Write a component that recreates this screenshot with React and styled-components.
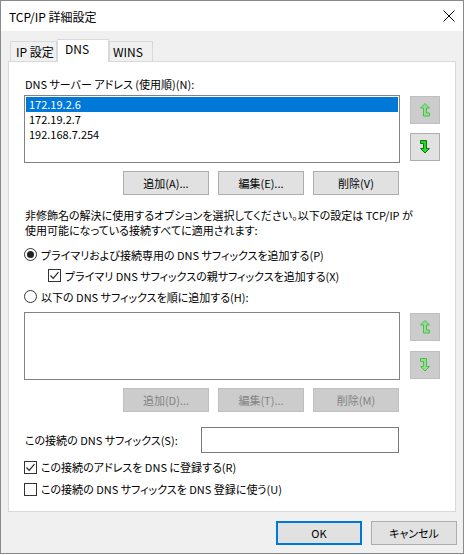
import React from "react";
import styled, { createGlobalStyle } from "styled-components";

const GlobalStyle = createGlobalStyle`
  html, body {
    margin: 0;
    padding: 0;
    background: #ffffff;
  }
  body {
    font-family: "Noto Sans CJK JP", "Noto Sans", sans-serif;
    font-size: 11px;
    font-feature-settings: "palt";
    color: #000;
  }
`;

const Window = styled.div`
  width: 464px;
  height: 554px;
  box-sizing: border-box;
  border: 1px solid #8a8a8a;
  display: flex;
  flex-direction: column;
  background: #f0f0f0;
`;

const TitleBar = styled.div`
  height: 30px;
  background: #fff;
  display: flex;
  align-items: center;
  justify-content: space-between;
  padding: 0 8px 0 8px;
`;

const Title = styled.span`
  font-size: 12px;
  line-height: 15px;
`;

const Body = styled.div`
  flex: 1;
  padding: 8px 7px 0 7px;
  display: flex;
  flex-direction: column;
`;

const TabRow = styled.div`
  height: 22px;
  display: flex;
  align-items: flex-end;
  padding-left: 2px;
`;

const Tab = styled.div`
  box-sizing: border-box;
  width: ${(p) => p.$w}px;
  height: ${(p) => (p.$active ? 23 : 20)}px;
  margin-bottom: ${(p) => (p.$active ? -1 : 0)}px;
  border: 1px solid #d9d9d9;
  border-bottom: none;
  background: ${(p) => (p.$active ? "#fff" : "#f0f0f0")};
  position: relative;
  z-index: ${(p) => (p.$active ? 1 : 0)};
  padding-left: ${(p) => p.$pl}px;
  line-height: ${(p) => (p.$active ? 17 : 19)}px;
  font-size: 12px;
`;

const Panel = styled.div`
  box-sizing: border-box;
  width: 448px;
  height: 451px;
  border: 1px solid #d9d9d9;
  background: #fff;
  padding: 15px 14px 0 15px;
  display: flex;
  flex-direction: column;
`;

const Label = styled.div`
  line-height: 15px;
  height: 15px;
  padding-left: 1px;
  white-space: nowrap;
`;

const ListRow = styled.div`
  display: flex;
  gap: 10px;
  margin-top: ${(p) => p.$mt}px;
`;

const ListBox = styled.div`
  box-sizing: border-box;
  width: 376px;
  height: 68px;
  border: 1px solid #828282;
  background: #fff;
  padding: 1px;
`;

const ListItem = styled.div`
  height: 15px;
  line-height: 15px;
  padding-left: 3px;
  background: ${(p) => (p.$selected ? "#0078d7" : "transparent")};
  color: ${(p) => (p.$selected ? "#fff" : "#000")};
`;

const ArrowColumn = styled.div`
  display: flex;
  flex-direction: column;
  gap: ${(p) => p.$gap}px;
  padding-top: 1px;
`;

const ArrowButton = styled.div`
  box-sizing: border-box;
  width: 30px;
  height: 28px;
  border: 1px solid ${(p) => (p.$disabled ? "#bfbfbf" : "#adadad")};
  background: ${(p) => (p.$disabled ? "#cccccc" : "#e1e1e1")};
  display: flex;
  align-items: center;
  justify-content: center;
`;

const ButtonRow = styled.div`
  width: 376px;
  display: flex;
  justify-content: flex-end;
  gap: 9px;
  padding-right: 1px;
  box-sizing: border-box;
  margin-top: ${(p) => p.$mt}px;
`;

const Button = styled.div`
  box-sizing: border-box;
  width: 86px;
  height: 24px;
  border: ${(p) => (p.$default ? "2px solid #0078d7" : p.$disabled ? "1px solid #bfbfbf" : "1px solid #adadad")};
  background: ${(p) => (p.$disabled ? "#cccccc" : "#e1e1e1")};
  color: ${(p) => (p.$disabled ? "#838383" : "#000")};
  display: flex;
  align-items: center;
  justify-content: center;
  white-space: nowrap;
`;

const Paragraph = styled.div`
  margin-top: 13px;
  line-height: 15px;
  padding-left: 1px;
  white-space: nowrap;
`;

const OptionRow = styled.div`
  height: ${(p) => p.$h}px;
  display: flex;
  align-items: center;
  gap: 4px;
  padding-left: ${(p) => p.$indent || 0}px;
  margin-top: ${(p) => p.$mt || 0}px;
  white-space: nowrap;
`;

const Radio = styled.span`
  box-sizing: border-box;
  width: 13px;
  height: 13px;
  border-radius: 50%;
  border: 1px solid #333;
  display: flex;
  align-items: center;
  justify-content: center;
  flex: none;
  &::after {
    content: "";
    width: 7px;
    height: 7px;
    border-radius: 50%;
    background: ${(p) => (p.$checked ? "#222" : "transparent")};
  }
`;

const CheckBox = styled.span`
  box-sizing: border-box;
  width: 13px;
  height: 13px;
  border: 1px solid #333;
  background: #fff;
  display: flex;
  align-items: center;
  justify-content: center;
  flex: none;
`;

const SuffixRow = styled.div`
  display: flex;
  align-items: center;
  margin-top: 15px;
`;

const SuffixLabel = styled.span`
  width: 177px;
  padding-left: 1px;
  box-sizing: border-box;
  white-space: nowrap;
`;

const TextInput = styled.div`
  box-sizing: border-box;
  width: 198px;
  height: 26px;
  border: 1px solid #7a7a7a;
  background: #fff;
`;

const Footer = styled.div`
  display: flex;
  justify-content: flex-end;
  gap: 9px;
  margin-top: 9px;
  margin-right: -1px;
`;

function CheckMark() {
  return (
    <svg width="11" height="11" viewBox="0 0 11 11">
      <path d="M1.5 5.5 L4.2 8.3 L9.5 2.2" fill="none" stroke="#222" strokeWidth="1.2" />
    </svg>
  );
}

function UpArrow({ disabled }) {
  return (
    <svg width="10" height="14" viewBox="0 0 10 14">
      <path
        d="M9.5 13 L3.5 13 L3.5 5 L0.5 5 L5 0.5 L9.5 5 L6.5 5 L6.5 10 L9.5 10 Z"
        fill={disabled ? "#8fe08f" : "#2bd62b"}
        stroke={disabled ? "#4cbb4c" : "#067a06"}
        strokeWidth="1"
      />
    </svg>
  );
}

function DownArrow({ disabled }) {
  return (
    <svg width="10" height="14" viewBox="0 0 10 14">
      <path
        d="M0.5 0.5 L6.5 0.5 L6.5 8.5 L9.5 8.5 L5 13 L0.5 8.5 L3.5 8.5 L3.5 3.5 L0.5 3.5 Z"
        fill={disabled ? "#8fe08f" : "#2bd62b"}
        stroke={disabled ? "#4cbb4c" : "#067a06"}
        strokeWidth="1"
      />
    </svg>
  );
}

function CloseIcon() {
  return (
    <svg width="12" height="12" viewBox="0 0 12 12">
      <path d="M0.5 0.5 L11.5 11.5 M11.5 0.5 L0.5 11.5" stroke="#000" strokeWidth="1" />
    </svg>
  );
}

export default function App() {
  return (
    <>
      <GlobalStyle />
      <Window>
        <TitleBar>
          <Title>TCP/IP 詳細設定</Title>
          <CloseIcon />
        </TitleBar>
        <Body>
          <TabRow>
            <Tab $w={47} $pl={5}>IP 設定</Tab>
            <Tab $w={52} $pl={7} $active>DNS</Tab>
            <Tab $w={44} $pl={3}>WINS</Tab>
          </TabRow>
          <Panel>
            <Label>DNS サーバー アドレス (使用順)(N):</Label>
            <ListRow $mt={3}>
              <ListBox>
                <ListItem $selected>172.19.2.6</ListItem>
                <ListItem>172.19.2.7</ListItem>
                <ListItem>192.168.7.254</ListItem>
              </ListBox>
              <ArrowColumn $gap={9}>
                <ArrowButton $disabled>
                  <UpArrow disabled />
                </ArrowButton>
                <ArrowButton>
                  <DownArrow />
                </ArrowButton>
              </ArrowColumn>
            </ListRow>
            <ButtonRow $mt={8}>
              <Button>追加(A)...</Button>
              <Button>編集(E)...</Button>
              <Button>削除(V)</Button>
            </ButtonRow>
            <Paragraph>
              非修飾名の解決に使用するオプションを選択してください。以下の設定は TCP/IP が
              <br />
              使用可能になっている接続すべてに適用されます:
            </Paragraph>
            <OptionRow $h={21} $mt={6}>
              <Radio $checked />
              プライマリおよび接続専用の DNS サフィックスを追加する(P)
            </OptionRow>
            <OptionRow $h={21} $indent={24}>
              <CheckBox>
                <CheckMark />
              </CheckBox>
              プライマリ DNS サフィックスの親サフィックスを追加する(X)
            </OptionRow>
            <OptionRow $h={21}>
              <Radio />
              以下の DNS サフィックスを順に追加する(H):
            </OptionRow>
            <ListRow $mt={5}>
              <ListBox />
              <ArrowColumn $gap={10}>
                <ArrowButton $disabled>
                  <UpArrow disabled />
                </ArrowButton>
                <ArrowButton $disabled>
                  <DownArrow disabled />
                </ArrowButton>
              </ArrowColumn>
            </ListRow>
            <ButtonRow $mt={8}>
              <Button $disabled>追加(D)...</Button>
              <Button $disabled>編集(T)...</Button>
              <Button $disabled>削除(M)</Button>
            </ButtonRow>
            <SuffixRow>
              <SuffixLabel>この接続の DNS サフィックス(S):</SuffixLabel>
              <TextInput />
            </SuffixRow>
            <OptionRow $h={22} $mt={3}>
              <CheckBox>
                <CheckMark />
              </CheckBox>
              この接続のアドレスを DNS に登録する(R)
            </OptionRow>
            <OptionRow $h={22}>
              <CheckBox />
              この接続の DNS サフィックスを DNS 登録に使う(U)
            </OptionRow>
          </Panel>
          <Footer>
            <Button $default>OK</Button>
            <Button>キャンセル</Button>
          </Footer>
        </Body>
      </Window>
    </>
  );
}
